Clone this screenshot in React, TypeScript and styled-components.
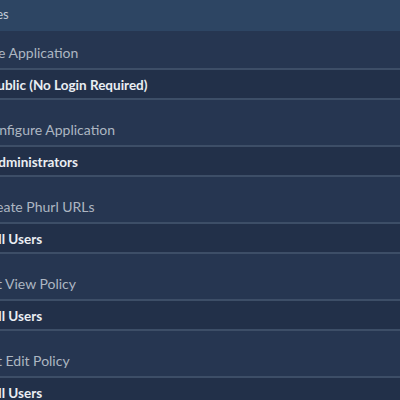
import styled, { createGlobalStyle } from 'styled-components';

const GlobalStyle = createGlobalStyle`
  body {
    margin: 0;
    background: #223049;
    font-family: Lato, 'Open Sans', sans-serif;
    overflow: hidden;
  }
`;

const permissions = [
  { label: 'Use Application', value: 'Public (No Login Required)' },
  { label: 'Configure Application', value: 'Administrators' },
  { label: 'Create Phurl URLs', value: 'All Users' },
  { label: 'Set View Policy', value: 'All Users' },
  { label: 'Set Edit Policy', value: 'All Users' },
];

export default function App() {
  return (
    <>
      <GlobalStyle />
      <Panel>
        <Header>Roles</Header>
        <List>
          {permissions.map((p, i) => (
            <Item key={p.label}>
              <Label first={i === 0}>{p.label}</Label>
              <Value>{p.value}</Value>
            </Item>
          ))}
        </List>
      </Panel>
    </>
  );
}

// the screenshot is cropped on the left, so the panel starts off-screen
const Panel = styled.div`
  margin-left: -23px;
  width: 440px;
`;

const Header = styled.div`
  height: 31px;
  display: flex;
  align-items: center;
  padding: 0 0 4px 1px;
  box-sizing: border-box;
  background: #2d4563;
  color: #c3ccd8;
  font-size: 13px;
`;

const List = styled.div`
  display: flex;
  flex-direction: column;
`;

const Item = styled.div`
  display: flex;
  flex-direction: column;
  background: #263651;
`;

const Label = styled.div<{ first?: boolean }>`
  height: ${(p) => (p.first ? 39 : 47)}px;
  display: flex;
  align-items: flex-end;
  padding: 0 0 7px 5px;
  box-sizing: border-box;
  color: #adb6c2;
  font-size: 14px;
  border-bottom: 2px solid #3d4e67;
`;

const Value = styled.div`
  height: 30px;
  display: flex;
  align-items: center;
  padding: 1px 0 0 12px;
  box-sizing: border-box;
  background: #223049;
  color: #eaeef3;
  font-size: 13.5px;
  font-weight: 700;
  border-bottom: 2px solid #3d4e67;
`;
